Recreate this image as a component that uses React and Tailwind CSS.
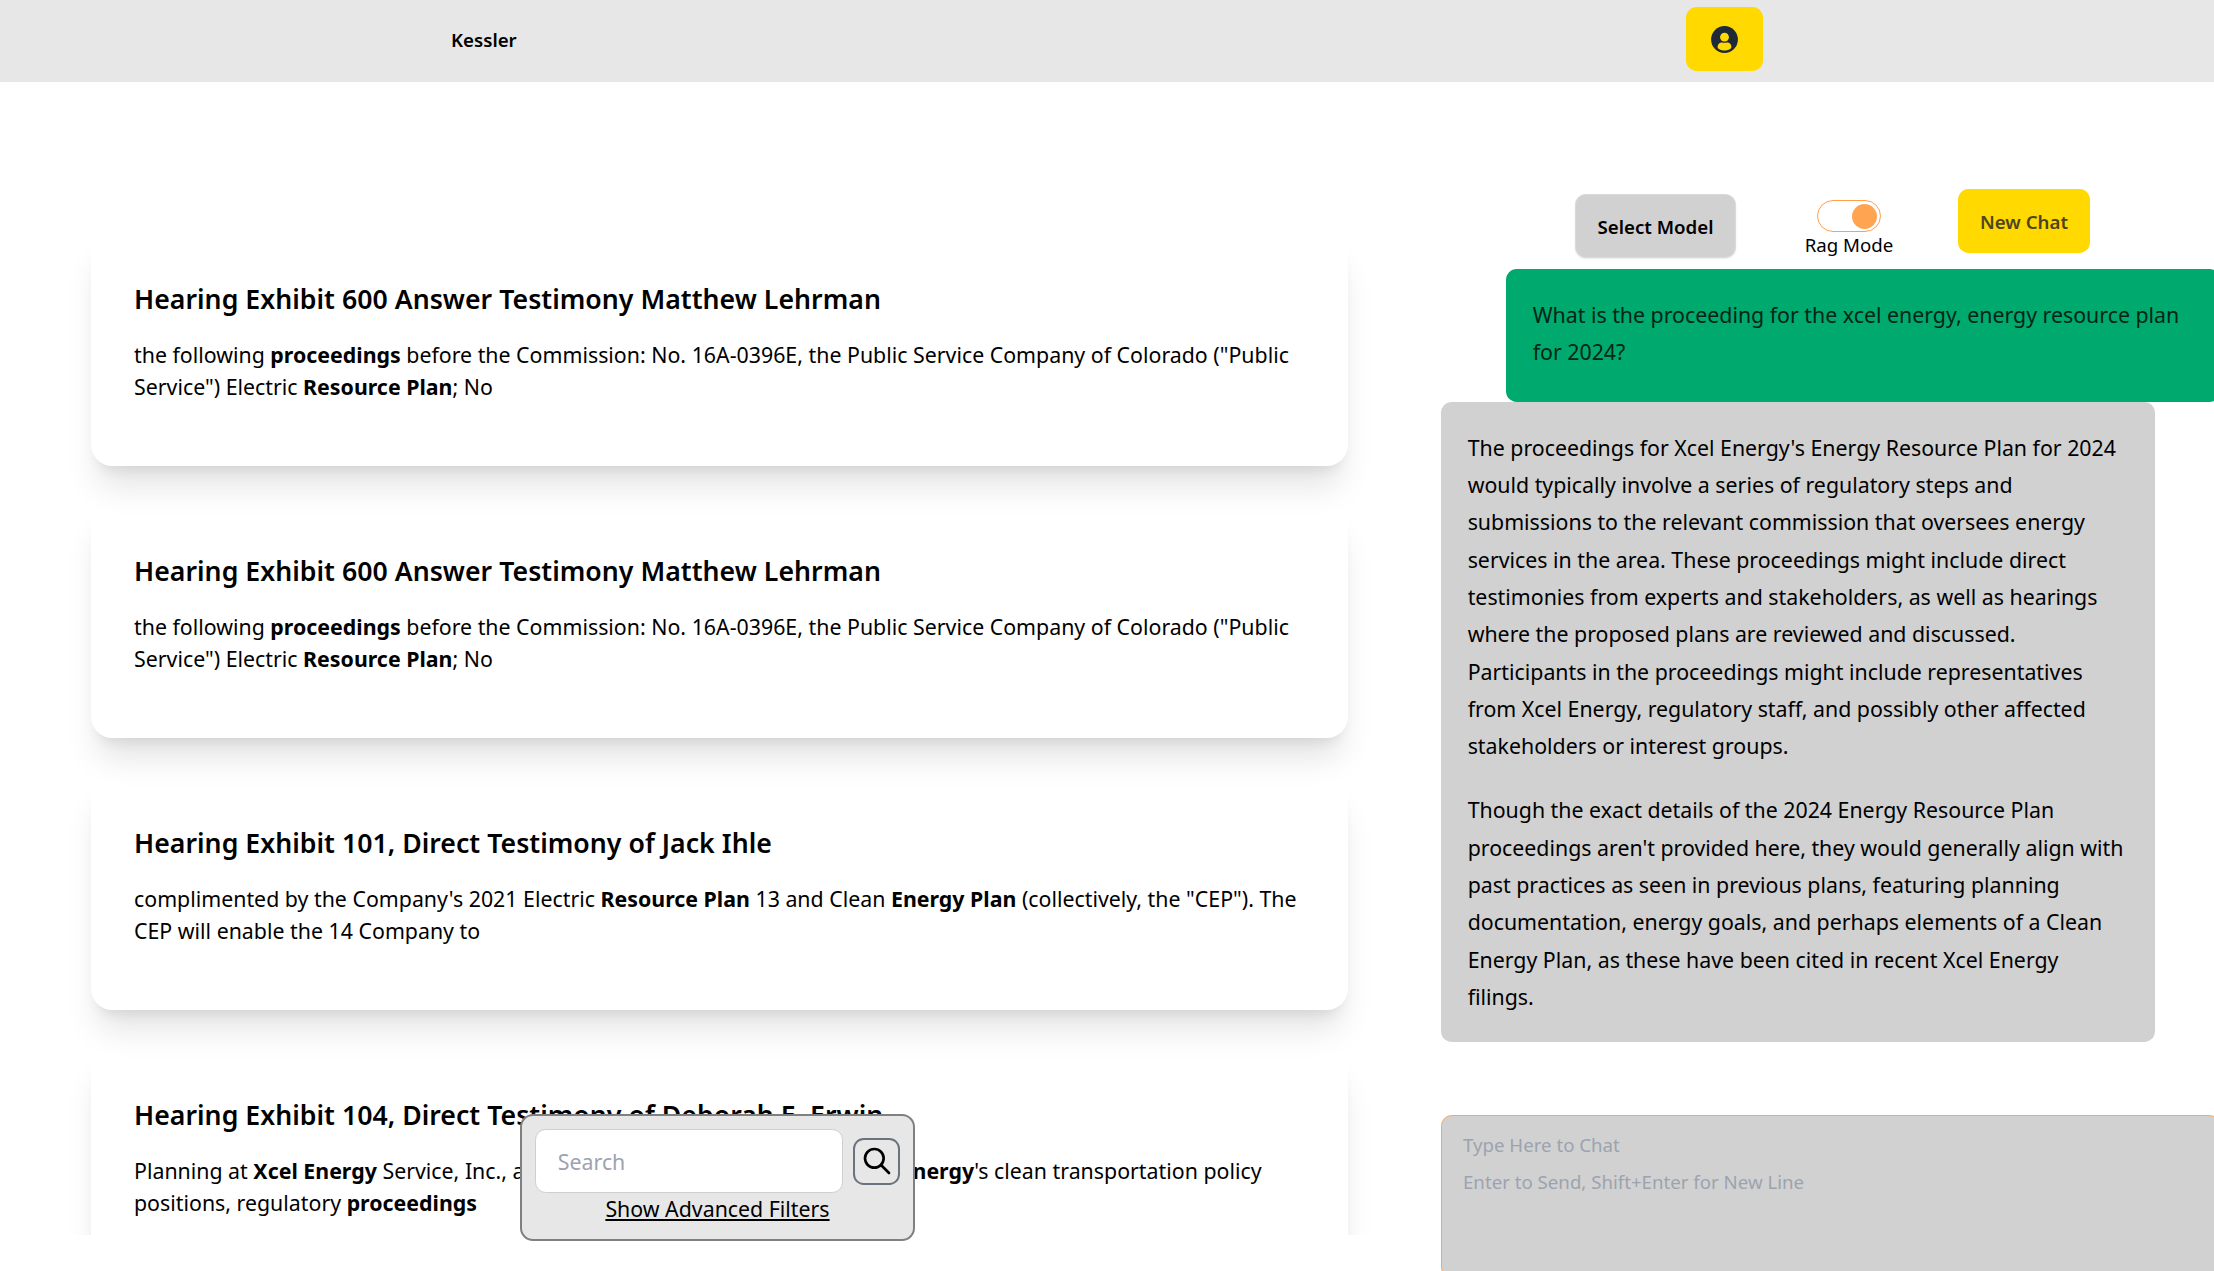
import React from "react";

const results = [
  {
    title: "Hearing Exhibit 600 Answer Testimony Matthew Lehrman",
    body: (
      <>
        the following <b>proceedings</b> before the Commission: No. 16A-0396E, the Public Service
        Company of Colorado ("Public Service") Electric <b>Resource Plan</b>; No
      </>
    ),
  },
  {
    title: "Hearing Exhibit 600 Answer Testimony Matthew Lehrman",
    body: (
      <>
        the following <b>proceedings</b> before the Commission: No. 16A-0396E, the Public Service
        Company of Colorado ("Public Service") Electric <b>Resource Plan</b>; No
      </>
    ),
  },
  {
    title: "Hearing Exhibit 101, Direct Testimony of Jack Ihle",
    body: (
      <>
        complimented by the Company's 2021 Electric <b>Resource Plan</b> 13 and Clean{" "}
        <b>Energy Plan</b> (collectively, the "CEP"). The CEP will enable the 14 Company to
      </>
    ),
  },
  {
    title: "Hearing Exhibit 104, Direct Testimony of Deborah E. Erwin",
    body: (
      <>
        Planning at <b>Xcel Energy</b> Service, Inc.,{" "}
        <span className="inline-block w-[388px] align-top">and I support the work of Xcel</span>
        <b>Energy</b>'s clean transportation policy positions, regulatory <b>proceedings</b>
      </>
    ),
  },
];

function UserIcon() {
  return (
    <svg width="27" height="27" viewBox="0 0 27 27">
      <circle cx="13.5" cy="13.5" r="13.4" fill="#1f2937" />
      <circle cx="13.5" cy="11.2" r="4.4" fill="#ffd900" />
      <path
        d="M6.6 20.9C6.6 18 8.6 16.4 10.6 16.4c1 0 1.6.4 2.9.4s1.9-.4 2.9-.4c2 0 4 1.6 4 4.5 0 2.3-3.8 3.5-6.9 3.5s-6.9-1.2-6.9-3.5z"
        fill="#ffd900"
      />
    </svg>
  );
}

function SearchIcon() {
  return (
    <svg width="32" height="32" viewBox="0 0 24 24" fill="none" stroke="black" strokeWidth="2" strokeLinecap="round">
      <circle cx="10" cy="10" r="7" />
      <path d="M21 21l-6-6" />
    </svg>
  );
}

function ResultCard({ title, children }) {
  return (
    <article className="h-[233px] shrink-0 rounded-[21.33px] px-[43px] pt-[47px] shadow-[0_26.67px_33.33px_-6.67px_rgba(0,0,0,0.1),0_10.67px_13.33px_-8px_rgba(0,0,0,0.1)]">
      <h2 className="text-[26.67px] leading-[37.33px] font-semibold tracking-[0.03px]">{title}</h2>
      <p className="mt-[21.33px] text-[21.33px] leading-[32px] tracking-[0.005px]">{children}</p>
    </article>
  );
}

function SearchPanel() {
  return (
    <div className="absolute top-[1114px] left-[520px] flex h-[127px] w-[395px] flex-col items-center rounded-[13px] border-2 border-[#808080] bg-[#e7e7e7] pt-[13px]">
      <div className="flex w-full items-center gap-[10.5px] pl-[13.3px]">
        <input
          className="h-16 w-[307.5px] rounded-[10.67px] border border-[#cfcfcf] bg-white px-[21.5px] text-[21.33px] placeholder:text-[#9ca3af]"
          placeholder="Search"
        />
        <button className="flex h-[47px] w-[47px] items-center justify-center rounded-[10.67px] border-2 border-[#6b7280]">
          <SearchIcon />
        </button>
      </div>
      <a className="text-[21.33px] leading-[32px] underline">Show Advanced Filters</a>
    </div>
  );
}

function ChatPanel() {
  return (
    <section className="ml-[93px] flex w-[779px] shrink-0 flex-col pt-[107px]">
      <div className="flex h-20 shrink-0 items-start pl-[134px]">
        <button className="mt-[5px] h-16 w-[161px] rounded-[10.67px] border border-[#dadada] bg-[#d1d1d1] pt-px text-[18.67px] font-semibold shadow-[0_1px_2px_rgba(0,0,0,0.08)]">
          Select Model
        </button>
        <div className="ml-[68px] flex w-[90px] flex-col items-center pt-[11px]">
          <span className="flex h-8 w-16 items-center justify-end rounded-full border border-[#ffa04f] pr-[3px]">
            <span className="h-[25px] w-[25px] rounded-full bg-[#ffa552]" />
          </span>
          <span className="text-[18.67px] leading-[26.67px] whitespace-nowrap">Rag Mode</span>
        </div>
        <button className="ml-[64px] h-16 w-[132px] rounded-[10.67px] bg-[#ffd900] pt-px text-[18.67px] font-semibold text-[#4c4520]">
          New Chat
        </button>
      </div>
      <div className="ml-[65px] h-[133px] w-[714px] shrink-0 rounded-[10.67px] bg-[#00a96e] px-[26.67px] pt-[26.67px] text-[21.33px] leading-[37.33px] text-[#002616]">
        What is the proceeding for the xcel energy, energy resource plan for 2024?
      </div>
      <div className="h-[640px] w-[714px] shrink-0 rounded-[10.67px] bg-[#d1d1d1] px-[26.67px] pt-[26.67px] text-[21.33px] leading-[37.33px]">
        <p>
          The proceedings for Xcel Energy's Energy Resource Plan for 2024 would typically involve a
          series of regulatory steps and submissions to the relevant commission that oversees energy
          services in the area. These proceedings might include direct testimonies from experts and
          stakeholders, as well as hearings where the proposed plans are reviewed and discussed.
          Participants in the proceedings might include representatives from Xcel Energy, regulatory
          staff, and possibly other affected stakeholders or interest groups.
        </p>
        <p className="mt-[26.67px]">
          Though the exact details of the 2024 Energy Resource Plan proceedings aren't provided
          here, they would generally align with past practices as seen in previous plans, featuring
          planning documentation, energy goals, and perhaps elements of a Clean Energy Plan, as
          these have been cited in recent Xcel Energy filings.
        </p>
      </div>
      <textarea
        className="mt-[73px] h-[163px] w-[779px] shrink-0 rounded-[10.67px] border border-[#ffa552] bg-[#d1d1d1] px-[21px] py-[10px] text-[18.67px] leading-[37.33px] placeholder:text-[#9ca3af]"
        placeholder={"Type Here to Chat\nEnter to Send, Shift+Enter for New Line"}
      />
    </section>
  );
}

export default function App() {
  return (
    <div className="relative flex h-screen w-screen flex-col overflow-hidden bg-white font-['Noto_Sans',sans-serif] text-black">
      <header className="flex h-[82px] shrink-0 items-center justify-between bg-[#e7e7e7] pr-[451px] pl-[451px]">
        <span className="mb-0.5 text-[18.67px] leading-[26.67px] font-semibold">Kessler</span>
        <button className="mb-1 flex h-16 w-[77px] items-center justify-center rounded-[10.67px] bg-[#ffd900]">
          <UserIcon />
        </button>
      </header>
      <main className="flex min-h-0 flex-1">
        <section className="flex h-[1153px] w-[1348px] shrink-0 flex-col gap-[39px] [clip-path:inset(0_-60px_0_0)] pt-[151px] pl-[91px]">
          {results.map((r, i) => (
            <ResultCard key={i} title={r.title}>
              {r.body}
            </ResultCard>
          ))}
        </section>
        <ChatPanel />
      </main>
      <SearchPanel />
    </div>
  );
}
